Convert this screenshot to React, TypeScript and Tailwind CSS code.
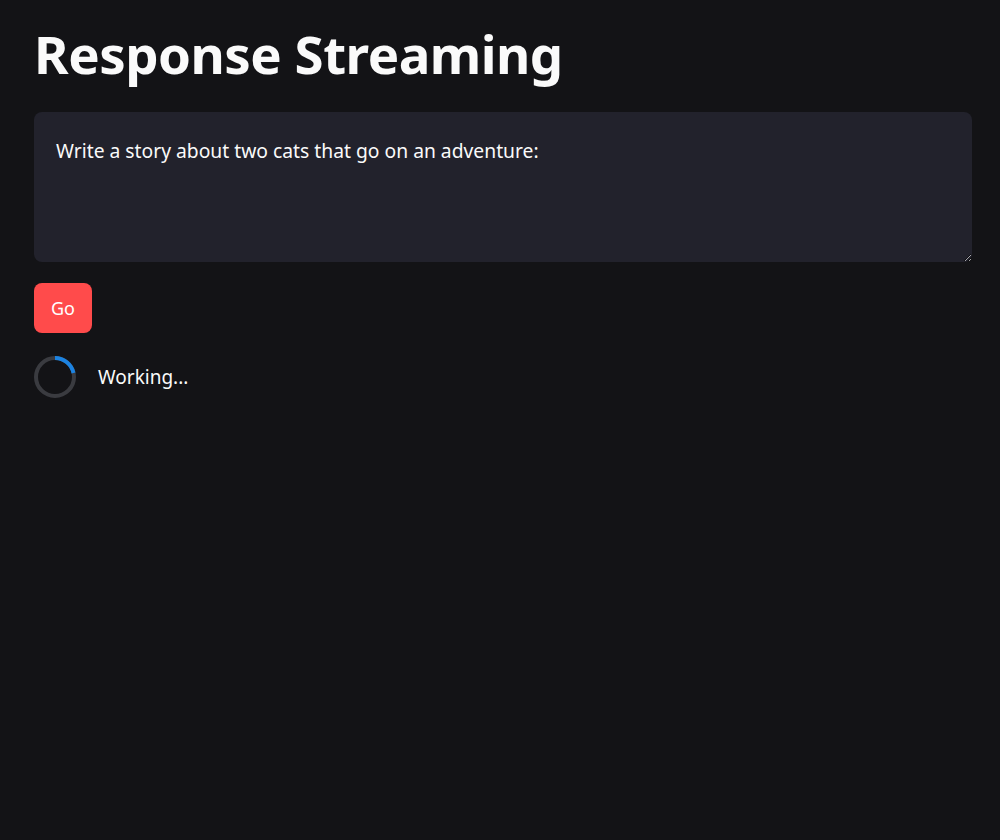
import React from "react";

export default function App() {
  return (
    <div className="min-h-[840px] w-full bg-[#131316] text-[#fafafa]" style={{ fontFamily: '"Noto Sans", "Open Sans", sans-serif' }}>
      <div className="px-[34px] pt-[18px]">
        <h1 className="text-[52.8px] font-bold leading-[72px] tracking-[-0.5px] text-[#fafafa]">Response Streaming</h1>
        <textarea
          className="mt-[22px] block h-[150px] w-[938px] resize-y rounded-[8px] bg-[#22222c] px-[22px] pt-[26px] pb-[22px] text-[19.3px] leading-[26px] text-[#fafafa] outline-none"
          defaultValue="Write a story about two cats that go on an adventure:"
        />
        <button className="mt-[21px] flex h-[50px] w-[58px] items-center justify-center rounded-[8px] bg-[#ff4b4b] text-[18px] text-white">
          Go
        </button>
        <div className="mt-[23px] flex items-center gap-[22px]">
          <svg width="42" height="42" viewBox="0 0 42 42">
            <circle cx="21" cy="21" r="19" fill="none" stroke="#3a3b40" strokeWidth="4" />
            <path d="M21 2 A19 19 0 0 1 39.5 17" fill="none" stroke="#1c83e1" strokeWidth="4" />
          </svg>
          <span className="text-[19px]">Working...</span>
        </div>
      </div>
    </div>
  );
}
